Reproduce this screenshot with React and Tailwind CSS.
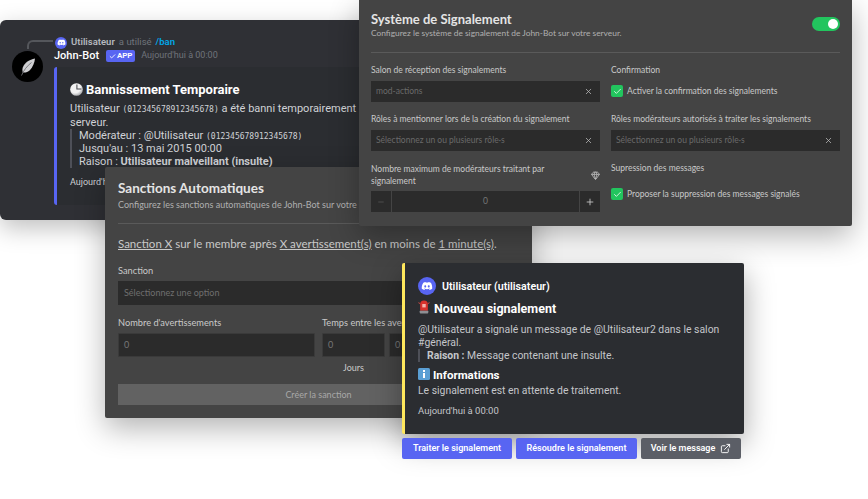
import { X, Check, Minus, Plus, Gem, ExternalLink } from 'lucide-react'

function DiscordLogo({ className }) {
    return (
        <svg viewBox="0 0 24 24" className={className} fill="currentColor">
            <path d="M19.3 5.3A17 17 0 0 0 15 4l-.5 1.100a16 16 0 0 0-5 0L9 4a17 17 0 0 0-4.300 1.300C2 9.400 1.200 13.400 1.600 17.300A17 17 0 0 0 6.900 20l1.100-1.800c-.6-.2-1.200-.5-1.700-.8l.4-.3a12 12 0 0 0 10.600 0l.4.3c-.5.300-1.100.6-1.700.8l1.100 1.800a17 17 0 0 0 5.300-2.700c.5-4.500-.8-8.500-2.600-12zM8.500 14.900c-1 0-1.900-1-1.900-2.100s.8-2.100 1.900-2.100 1.900 1 1.900 2.100-.8 2.100-1.900 2.100zm7 0c-1 0-1.900-1-1.900-2.100s.8-2.100 1.900-2.100 1.900 1 1.900 2.100-.9 2.100-1.900 2.100z" />
        </svg>
    )
}

function ClockEmoji() {
    return (
        <svg viewBox="0 0 16 16" className="w-[13px] h-[13px] mr-[3px] shrink-0">
            <defs>
                <radialGradient id="clockFace" cx="0.4" cy="0.35" r="0.75">
                    <stop offset="0.55" stopColor="#f2f2f2" />
                    <stop offset="1" stopColor="#8f9094" />
                </radialGradient>
            </defs>
            <circle cx="8" cy="8" r="7.800" fill="url(#clockFace)" />
            <path d="M8.500 1.800V7.500H14" fill="none" stroke="#4a4b50" strokeWidth="1.300" />
        </svg>
    )
}

function LightEmoji() {
    return (
        <svg viewBox="0 0 14 16" className="w-[12px] h-[14px] mr-[4px] mt-[-2px] shrink-0">
            <rect x="2" y="12" width="10" height="3.500" rx="1" fill="#8d8f94" />
            <path d="M2.500 12V5a4.500 4.500 0 0 1 9 0v7z" fill="#d8322c" />
            <path d="M5 4.500h4v4H5z" fill="#f4b4ae" />
            <path d="M.5 3l2 1M13.500 3l-2 1" stroke="#e8504a" strokeWidth="1" />
        </svg>
    )
}

function InfoEmoji() {
    return (
        <svg viewBox="0 0 12 12" className="w-[12px] h-[12px] mr-[3px] mt-[-2px] shrink-0">
            <rect width="12" height="12" rx="1.500" fill="#5a9fd4" />
            <rect x="5" y="5" width="2" height="5" fill="#fff" />
            <rect x="5" y="2" width="2" height="2" fill="#fff" />
        </svg>
    )
}

function Field({ value, clear }) {
    return (
        <div className="h-[21px] bg-[#2b2b2b] flex items-center justify-between px-[5px] text-[8.5px] text-[#6a6a6a]">
            <span>{value}</span>
            {clear && <X className="w-[9px] h-[9px] mr-[2px] text-[#bdbdbd]" strokeWidth={2} />}
        </div>
    )
}

function CheckRow({ children }) {
    return (
        <div className="flex items-center gap-[4px] text-[8.5px] text-[#c9c9c9]">
            <span className="w-[12px] h-[12px] rounded-[2px] bg-[#22c55e] flex items-center justify-center">
                <Check className="w-[9px] h-[9px] text-white" strokeWidth={2} />
            </span>
            {children}
        </div>
    )
}

function NumberBox({ className }) {
    return (
        <div className={`h-[24px] bg-[#2b2b2b] border border-[#3a3a3a] rounded-[1px] flex items-center pl-[5px] text-[9px] text-[#777] ${className}`}>
            0
        </div>
    )
}

export default function App() {
    return (
        <div className="relative w-[868px] h-[499px] bg-white overflow-hidden font-['Lato',sans-serif]">

            {/* message de ban */}
            <div className="absolute left-0 top-[20px] w-[372px] h-[200px] bg-[#2f3035] rounded-[6px] shadow-[0_8px_24px_rgba(0,0,0,0.25)] font-['Roboto',sans-serif] pl-[54px] pt-[16px]">
                <div className="absolute left-[27px] top-[20px] w-[26px] h-[9px] border-l-2 border-t-2 border-[#55575c] rounded-tl-[6px]" />
                <div className="absolute left-[12px] top-[31px] w-[31px] h-[31px] rounded-full bg-black flex items-center justify-center">
                    <svg viewBox="0 0 20 20" className="w-[20px] h-[20px]">
                        <path d="M17 1.500C11.500 2.500 6.500 5.500 4.800 10.500c-.6 1.800-.5 3.500 0 5 2.500.3 5-.3 7-2.300 3-3 4.700-7.500 5.200-11.700z" fill="#cfcfd2" />
                        <path d="M3.500 18.500C5.500 13.500 9 9 13.500 5.500" fill="none" stroke="#6f7075" strokeWidth="0.900" />
                    </svg>
                </div>
                <div className="flex items-center h-[13px] text-[9.500px] text-[#70747b]">
                    <span className="w-[12px] h-[12px] rounded-full bg-[#5865f2] flex items-center justify-center text-white mr-[4px] ml-px">
                        <DiscordLogo className="w-[9px] h-[9px]" />
                    </span>
                    <span className="font-semibold text-[#b5b9bf]">Utilisateur</span>
                    <span className="ml-[4px]">a utilisé</span>
                    <span className="ml-[4px] text-[#00a8e8] font-semibold">/ban</span>
                </div>
                <div className="flex items-center h-[14px] text-[11px] text-white font-medium">
                    John-Bot
                    <span className="ml-[7px] h-[12px] w-[29px] bg-[#5865f2] rounded-[2px] flex items-center justify-center gap-[1px] text-[8px] font-semibold">
                        <Check className="w-[7px] h-[7px]" strokeWidth={3} />APP
                    </span>
                    <span className="ml-[6px] text-[9px] font-normal text-[#70747b]">Aujourd'hui à 00:00</span>
                </div>
                <div className="mt-[4px] h-[138px] bg-[#2b2d31] border-l-[3px] border-[#5865f2] rounded-l-[3px] pl-[13px] pt-[14px] text-[11px] leading-[13px] text-[#d0d2d6]">
                    <div className="flex items-center text-[13px] font-bold text-white h-[16px] mb-[5px] whitespace-nowrap">
                        <ClockEmoji />
                        Bannissement Temporaire
                    </div>
                    <div className="whitespace-nowrap h-[14px]">Utilisateur <code className="font-['DejaVu_Sans_Mono',monospace] text-[8px]">(012345678912345678)</code> a été banni temporairement du</div>
                    <div className="h-[13px]">serveur.</div>
                    <div className="border-l-2 border-[#4e5058] pl-[7px] whitespace-nowrap">
                        <div className="h-[13px]">Modérateur : @Utilisateur <code className="font-['DejaVu_Sans_Mono',monospace] text-[8px]">(012345678912345678)</code></div>
                        <div className="h-[13px]">Jusqu'au : 13 mai 2015 00:00</div>
                        <div className="h-[13px]">Raison : <b className="font-bold">Utilisateur malveillant (insulte)</b></div>
                    </div>
                    <div className="mt-[8px] text-[9px]">Aujourd'hui à 00:00</div>
                </div>
            </div>

            {/* sanctions automatiques */}
            <div className="absolute left-[105px] top-[167px] w-[427px] h-[251px] bg-[#444444] rounded-[2px] shadow-[0_10px_30px_rgba(0,0,0,0.3)] px-[13px] pt-[13px]">
                <div className="text-[13.5px] leading-[17px] font-bold text-[#e4e4e4]">Sanctions Automatiques</div>
                <div className="text-[9px] leading-[11px] mt-[2px] text-[#b0b0b0] whitespace-nowrap">Configurez les sanctions automatiques de John-Bot sur votre serveur.</div>
                <div className="h-px bg-[#5a5a5a] mt-[13px]" />
                <div className="text-[11.5px] leading-[14px] mt-[13px] text-[#c9c9c9] whitespace-nowrap">
                    <u>Sanction X</u> sur le membre après <u>X avertissement(s)</u> en moins de <u>1 minute(s)</u>.
                </div>
                <div className="text-[9.250px] leading-[11px] mt-[14px] text-[#c9c9c9]">Sanction</div>
                <div className="h-[24px] mt-[5px] bg-[#2b2b2b] flex items-center pl-[6px] text-[9px] text-[#6f6f6f]">Sélectionnez une option</div>
                <div className="flex gap-[7px] mt-[12px]">
                    <div className="w-[197px]">
                        <div className="text-[9.250px] leading-[11px] text-[#c9c9c9]">Nombre d'avertissements</div>
                        <NumberBox className="mt-[5px]" />
                    </div>
                    <div className="flex-1">
                        <div className="text-[9.250px] leading-[11px] text-[#c9c9c9] whitespace-nowrap">Temps entre les avertissements</div>
                        <div className="flex gap-[4px] mt-[5px]">
                            <div className="w-[63px]">
                                <NumberBox />
                                <div className="text-center text-[9px] leading-[11px] mt-[5px] text-[#c9c9c9]">Jours</div>
                            </div>
                            <NumberBox className="flex-1" />
                        </div>
                    </div>
                </div>
                <div className="h-[21px] mt-[11px] bg-[#626262] flex items-center justify-center text-[9px] text-[#a8a8a8]">Créer la sanction</div>
            </div>

            {/* systeme de signalement */}
            <div className="absolute left-[359px] top-0 w-[493px] h-[226px] bg-[#444444] rounded-b-[2px] shadow-[0_10px_30px_rgba(0,0,0,0.3)] px-[12px] pt-[11px]">
                <div className="flex justify-between items-center">
                    <div>
                        <div className="text-[13px] leading-[16px] font-bold text-[#e4e4e4]">Système de Signalement</div>
                        <div className="text-[8.4px] leading-[11px] mt-[1px] text-[#b0b0b0]">Configurez le système de signalement de John-Bot sur votre serveur.</div>
                    </div>
                    <span className="w-[28px] h-[14px] rounded-full bg-[#22c55e] flex items-center justify-end pr-[2px] ml-[1px] mt-[-2px]">
                        <span className="w-[10px] h-[10px] rounded-full bg-white" />
                    </span>
                </div>
                <div className="h-px bg-[#5a5a5a] mt-[13px]" />
                <div className="grid grid-cols-[229px_229px] gap-x-[11px] mt-[12px] text-[8.5px] text-[#c9c9c9]">
                    <div>
                        <div className="leading-[11px] mb-[5px]">Salon de réception des signalements</div>
                        <Field value="mod-actions" clear />
                    </div>
                    <div>
                        <div className="leading-[11px] mb-[5px]">Confirmation</div>
                        <div className="h-[20px] flex items-center"><CheckRow>Activer la confirmation des signalements</CheckRow></div>
                    </div>
                    <div className="mt-[12px]">
                        <div className="leading-[11px] mb-[5px]">Rôles à mentionner lors de la création du signalement</div>
                        <Field value="Sélectionnez un ou plusieurs rôle·s" clear />
                    </div>
                    <div className="mt-[12px]">
                        <div className="leading-[11px] mb-[5px]">Rôles modérateurs autorisés à traiter les signalements</div>
                        <Field value="Sélectionnez un ou plusieurs rôle·s" clear />
                    </div>
                    <div className="mt-[12px]">
                        <div className="flex items-center justify-between">
                            <div className="leading-[12px] w-[190px]">Nombre maximum de modérateurs traitant par signalement</div>
                            <Gem className="w-[9px] h-[9px] text-[#c9c9c9]" />
                        </div>
                        <div className="h-[21px] mt-[4px] bg-[#2b2b2b] flex items-center text-[#777]">
                            <span className="w-[21px] h-full flex items-center justify-center border-r border-[#444]"><Minus className="w-[8px] h-[8px] text-[#5f5f5f]" /></span>
                            <span className="flex-1 text-center">0</span>
                            <span className="w-[21px] h-full flex items-center justify-center border-l border-[#444]"><Plus className="w-[10px] h-[10px] text-[#ccc]" /></span>
                        </div>
                    </div>
                    <div className="mt-[12px]">
                        <div className="leading-[11px] mb-[14px]">Supression des messages</div>
                        <CheckRow>Proposer la suppression des messages signalés</CheckRow>
                    </div>
                </div>
            </div>

            {/* nouveau signalement */}
            <div className="absolute left-[402px] top-[263px] w-[342px] font-['Roboto',sans-serif]">
                <div className="h-[171px] bg-[#2b2d31] border-l-[3px] border-[#fee75c] rounded-[2px] shadow-[0_10px_30px_rgba(0,0,0,0.35)] pl-[13px] pt-[14px] text-[10.400px] leading-[13px] text-[#c4c6ca]">
                    <div className="flex items-center h-[18px] text-[10.700px] font-semibold text-white">
                        <span className="w-[18px] h-[18px] rounded-full bg-[#5865f2] flex items-center justify-center mr-[6px]">
                            <DiscordLogo className="w-[12px] h-[12px]" />
                        </span>
                        Utilisateur (utilisateur)
                    </div>
                    <div className="flex items-center h-[16px] mt-[5px] text-[12.5px] font-bold text-white">
                        <LightEmoji />
                        Nouveau signalement
                    </div>
                    <div className="mt-[7px] w-[310px]">@Utilisateur a signalé un message de @Utilisateur2 dans le salon #général.</div>
                    <div className="border-l-2 border-[#4e5058] pl-[7px]"><b className="font-bold">Raison :</b> Message contenant une insulte.</div>
                    <div className="flex items-center h-[14px] mt-[6px] text-[11.5px] font-bold text-white">
                        <InfoEmoji />
                        Informations
                    </div>
                    <div className="mt-[2px]">Le signalement est en attente de traitement.</div>
                    <div className="mt-[7px] text-[9.5px]">Aujourd'hui à 00:00</div>
                </div>
                <div className="flex gap-[4px] mt-[4px] text-[9px] font-semibold text-white">
                    <span className="h-[21px] w-[110px] bg-[#5865f2] rounded-[2px] flex items-center justify-center">Traiter le signalement</span>
                    <span className="h-[21px] w-[121px] bg-[#5865f2] rounded-[2px] flex items-center justify-center">Résoudre le signalement</span>
                    <span className="h-[21px] w-[100px] bg-[#5b5e66] rounded-[2px] flex items-center justify-center gap-[5px]">Voir le message <ExternalLink className="w-[11px] h-[11px]" /></span>
                </div>
            </div>
        </div>
    )
}
